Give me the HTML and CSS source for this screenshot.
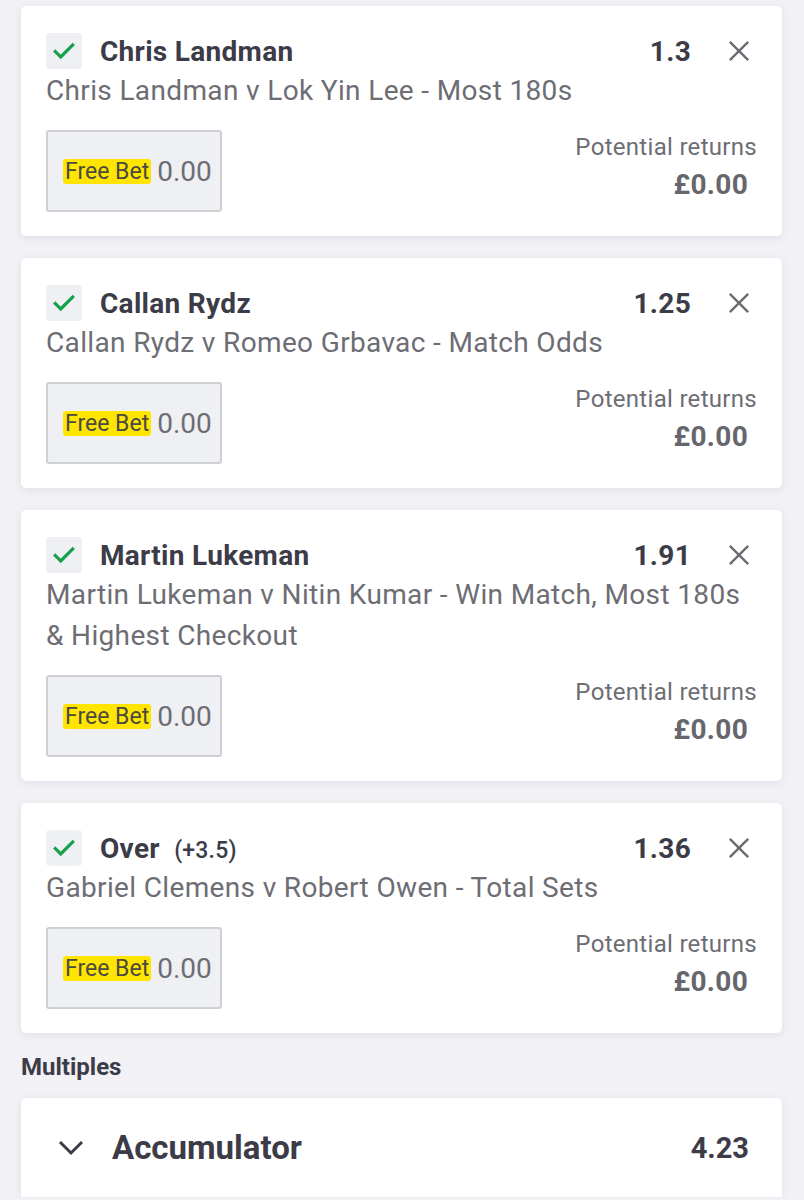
FILE: index.html
```html
<!DOCTYPE html>
<html>
<head>
<meta charset="utf-8">
<link rel="stylesheet" href="styles.css">
</head>
<body>
<div class="page">
  <div class="card">
    <div class="head">
      <span class="check"><svg viewBox="0 0 24 24" width="26" height="26"><path d="M4 12.5l5 5L20 6.5" fill="none" stroke="#17a04a" stroke-width="3" stroke-linecap="square"/></svg></span>
      <span class="title">Chris Landman</span>
      <span class="odds">1.3</span>
      <span class="close"><svg viewBox="0 0 24 24" width="24" height="24"><path d="M2 2L22 22M22 2L2 22" stroke="#6b6b72" stroke-width="2.6"/></svg></span>
    </div>
    <div class="desc">Chris Landman v Lok Yin Lee - Most 180s</div>
    <div class="stake">
      <div class="box"><span class="fb">Free Bet</span> <span class="amt">0.00</span></div>
      <div class="returns"><div class="rl">Potential returns</div><div class="rv">£0.00</div></div>
    </div>
  </div>
  <div class="card">
    <div class="head">
      <span class="check"><svg viewBox="0 0 24 24" width="26" height="26"><path d="M4 12.5l5 5L20 6.5" fill="none" stroke="#17a04a" stroke-width="3" stroke-linecap="square"/></svg></span>
      <span class="title">Callan Rydz</span>
      <span class="odds">1.25</span>
      <span class="close"><svg viewBox="0 0 24 24" width="24" height="24"><path d="M2 2L22 22M22 2L2 22" stroke="#6b6b72" stroke-width="2.6"/></svg></span>
    </div>
    <div class="desc">Callan Rydz v Romeo Grbavac - Match Odds</div>
    <div class="stake">
      <div class="box"><span class="fb">Free Bet</span> <span class="amt">0.00</span></div>
      <div class="returns"><div class="rl">Potential returns</div><div class="rv">£0.00</div></div>
    </div>
  </div>
  <div class="card">
    <div class="head">
      <span class="check"><svg viewBox="0 0 24 24" width="26" height="26"><path d="M4 12.5l5 5L20 6.5" fill="none" stroke="#17a04a" stroke-width="3" stroke-linecap="square"/></svg></span>
      <span class="title">Martin Lukeman</span>
      <span class="odds">1.91</span>
      <span class="close"><svg viewBox="0 0 24 24" width="24" height="24"><path d="M2 2L22 22M22 2L2 22" stroke="#6b6b72" stroke-width="2.6"/></svg></span>
    </div>
    <div class="desc">Martin Lukeman v Nitin Kumar - Win Match, Most 180s &amp; Highest Checkout</div>
    <div class="stake">
      <div class="box"><span class="fb">Free Bet</span> <span class="amt">0.00</span></div>
      <div class="returns"><div class="rl">Potential returns</div><div class="rv">£0.00</div></div>
    </div>
  </div>
  <div class="card">
    <div class="head">
      <span class="check"><svg viewBox="0 0 24 24" width="26" height="26"><path d="M4 12.5l5 5L20 6.5" fill="none" stroke="#17a04a" stroke-width="3" stroke-linecap="square"/></svg></span>
      <span class="title">Over <span class="hcp">(+3.5)</span></span>
      <span class="odds">1.36</span>
      <span class="close"><svg viewBox="0 0 24 24" width="24" height="24"><path d="M2 2L22 22M22 2L2 22" stroke="#6b6b72" stroke-width="2.6"/></svg></span>
    </div>
    <div class="desc">Gabriel Clemens v Robert Owen - Total Sets</div>
    <div class="stake">
      <div class="box"><span class="fb">Free Bet</span> <span class="amt">0.00</span></div>
      <div class="returns"><div class="rl">Potential returns</div><div class="rv">£0.00</div></div>
    </div>
  </div>
  <div class="section">Multiples</div>
  <div class="acc">
    <span class="chev"><svg viewBox="0 0 26 16" width="26" height="16"><path d="M2 2L13 13L24 2" fill="none" stroke="#3c3c48" stroke-width="3"/></svg></span>
    <span class="acc-title">Accumulator</span>
    <span class="acc-odds">4.23</span>
  </div>
</div>
</body>
</html>
```

FILE: styles.css
```css
html, body {
  margin: 0;
  padding: 0;
  background: #f1f1f6;
}
body {
  font-family: Roboto, "Liberation Sans", sans-serif;
  color: #3c3c48;
}
.page {
  padding: 6px 22px 0 21px;
  display: flex;
  flex-direction: column;
  gap: 22px;
}
.card {
  background: #fff;
  border-radius: 5px;
  box-shadow: 0 2px 8px rgba(40, 40, 70, 0.09);
  padding: 27px 25px 24px 25px;
}
.head {
  display: flex;
  align-items: center;
  height: 36px;
}
.check {
  width: 36px;
  height: 36px;
  border-radius: 4px;
  background: #eff0f4;
  display: flex;
  align-items: center;
  justify-content: center;
  flex: none;
}
.title {
  margin-left: 18px;
  font-weight: 700;
  font-size: 28px;
  letter-spacing: 0.3px;
  color: #3c3c48;
  flex: 1;
}
.hcp {
  font-size: 23px;
  font-weight: 500;
  letter-spacing: 0.2px;
  margin-left: 7px;
}
.odds {
  font-weight: 700;
  font-size: 28px;
  letter-spacing: 0.3px;
  color: #3c3c48;
}
.close {
  margin-left: 37px;
  margin-right: 7px;
  display: flex;
  width: 22px;
  height: 22px;
}
.close svg {
  width: 22px;
  height: 22px;
}
.desc {
  margin-top: 1px;
  font-size: 28px;
  letter-spacing: 0.35px;
  line-height: 41px;
  color: #6d6d74;
}
.stake {
  margin-top: 19px;
  display: flex;
  justify-content: space-between;
  align-items: flex-start;
}
.box {
  width: 176px;
  height: 82px;
  box-sizing: border-box;
  background: #eff0f4;
  border: 2px solid #cfd0d4;
  border-radius: 3px;
  display: flex;
  align-items: center;
  padding-left: 15px;
}
.fb {
  background: #ffe500;
  color: #4a4a40;
  font-size: 23px;
  line-height: 25px;
  padding: 0 2px;
  border-radius: 3px;
}
.amt {
  margin-left: 6px;
  font-size: 28px;
  color: #6d6d74;
}
.returns {
  text-align: right;
  padding-top: 2px;
}
.rl {
  font-size: 24px;
  letter-spacing: 0.3px;
  line-height: 30px;
  color: #6d6d74;
}
.rv {
  margin-top: 6px;
  margin-right: 9px;
  font-size: 28px;
  letter-spacing: 0.3px;
  font-weight: 700;
  color: #66666d;
}
.section {
  font-size: 24px;
  font-weight: 700;
  color: #3c3c48;
  line-height: 28px;
  margin-top: -2px;
  margin-bottom: -5px;
}
.acc {
  background: #fff;
  border-radius: 5px 5px 0 0;
  box-shadow: 0 2px 8px rgba(40, 40, 70, 0.09);
  height: 99px;
  border-bottom: 1px solid #ececf0;
  display: flex;
  align-items: center;
  padding: 0 33px 0 37px;
}
.chev {
  display: flex;
  width: 26px;
}
.acc-title {
  margin-left: 28px;
  font-size: 33px;
  font-weight: 700;
  flex: 1;
}
.acc-odds {
  font-size: 29px;
  font-weight: 700;
}
```
